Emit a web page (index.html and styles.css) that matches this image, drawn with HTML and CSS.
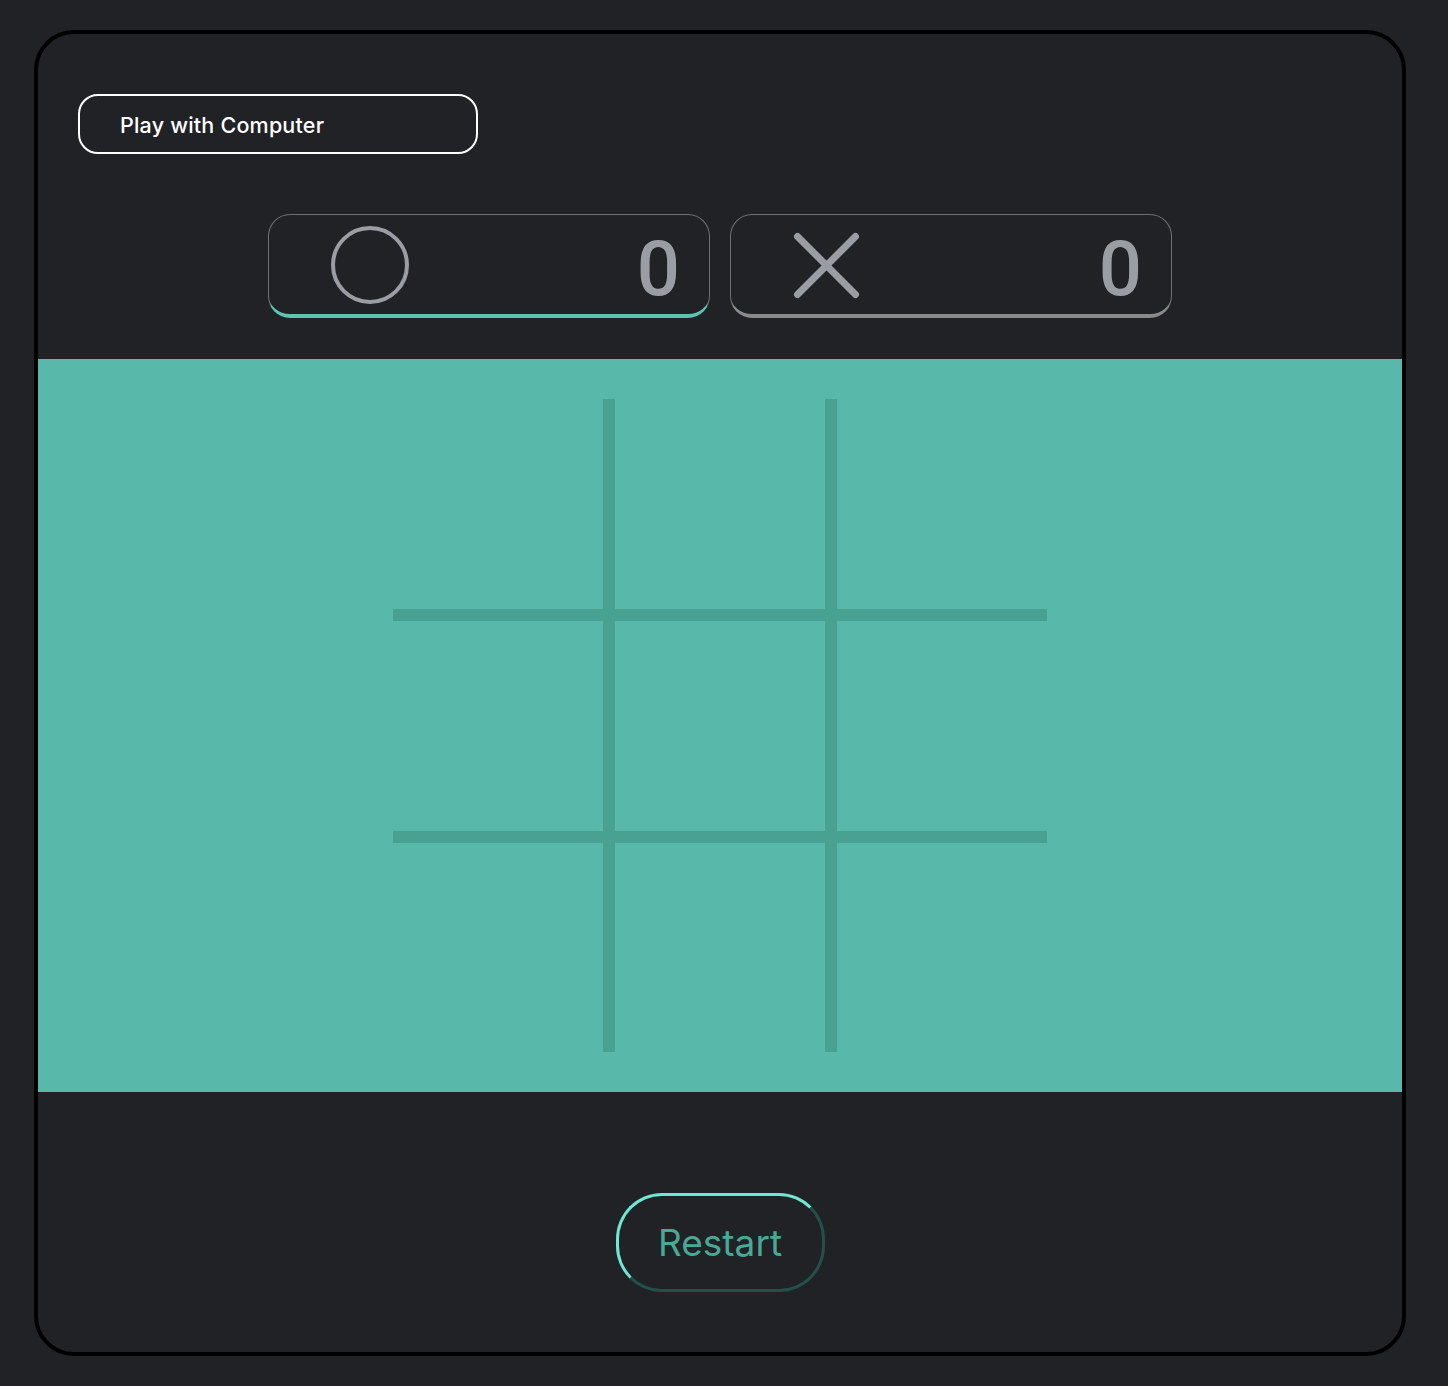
FILE: index.html
```html
<!DOCTYPE html>
<html lang="en">
<head>
<meta charset="utf-8">
<title>Tic Tac Toe</title>
<link rel="stylesheet" href="styles.css">
</head>
<body>
<main class="card">
  <header class="top">
    <button class="mode-btn">Play with Computer</button>
  </header>
  <section class="scores">
    <div class="score score-active">
      <svg class="mark" width="80" height="80" viewBox="0 0 80 80"><circle cx="40" cy="40" r="37" fill="none" stroke="#9a9da3" stroke-width="4"/></svg>
      <span class="num">0</span>
    </div>
    <div class="score">
      <svg class="mark" width="80" height="80" viewBox="0 0 80 80"><path d="M5.5 11.5 L63.5 69.5 M63.5 11.5 L5.5 69.5" stroke="#9a9da3" stroke-width="7" stroke-linecap="round" fill="none"/></svg>
      <span class="num">0</span>
    </div>
  </section>
  <section class="board">
    <div class="grid">
      <div class="cell"></div><div class="cell"></div><div class="cell"></div>
      <div class="cell"></div><div class="cell"></div><div class="cell"></div>
      <div class="cell"></div><div class="cell"></div><div class="cell"></div>
    </div>
  </section>
  <footer class="bottom">
    <button class="restart">Restart</button>
  </footer>
</main>
</body>
</html>
```
FILE: styles.css
```css
* { box-sizing: border-box; }
html, body { margin: 0; padding: 0; }
body {
  background: #212226;
  font-family: Inter, "Noto Sans", "Liberation Sans", sans-serif;
  padding: 30px 42px 30px 34px;
}
.card {
  width: 1372px;
  height: 1326px;
  border: 4px solid #000;
  border-radius: 40px;
  background: #212226;
  display: flex;
  flex-direction: column;
  overflow: hidden;
}
.top {
  padding: 60px 40px 0 40px;
}
.mode-btn {
  width: 400px;
  height: 60px;
  border: 2px solid #fff;
  border-radius: 20px;
  background: transparent;
  color: #fff;
  font-family: inherit;
  font-size: 21.5px;
  font-weight: 500;
  letter-spacing: 0.2px;
  text-align: left;
  padding: 2px 0 0 40px;
}
.scores {
  margin-top: 60px;
  display: flex;
  justify-content: center;
  gap: 20px;
}
.score {
  width: 442px;
  height: 104px;
  border: 1px solid #707070;
  border-bottom: 4px solid #8a8a8a;
  border-radius: 22px;
  display: flex;
  align-items: center;
  justify-content: space-between;
  padding: 0 29px 0 61px;
}
.score-active {
  border-bottom-color: #5cc4b0;
}
.mark { display: block; flex: none; }
.num {
  color: #9a9da3;
  font-family: Roboto, Inter, sans-serif;
  font-size: 76px;
  font-weight: 500;
  line-height: 1;
  margin-top: 9px;
}
.board {
  margin-top: 41px;
  background: #58b9ab;
  height: 733px;
  display: flex;
  justify-content: center;
  align-items: center;
}
.grid {
  display: grid;
  grid-template-columns: repeat(3, 210px);
  grid-template-rows: 210px 210px 209px;
  gap: 12px;
  background: #48a191;
}
.cell { background: #58b9ab; }
.bottom {
  flex: 1;
  display: flex;
  justify-content: center;
  padding-top: 101px;
}
.restart {
  width: 209px;
  height: 99px;
  border: 3px solid;
  border-color: #6fe7d2 #23504a #23504a #6fe7d2;
  border-radius: 46px;
  background: transparent;
  color: #4aa896;
  font-family: inherit;
  font-size: 37px;
  font-weight: 400;
  padding: 0;
}
```
